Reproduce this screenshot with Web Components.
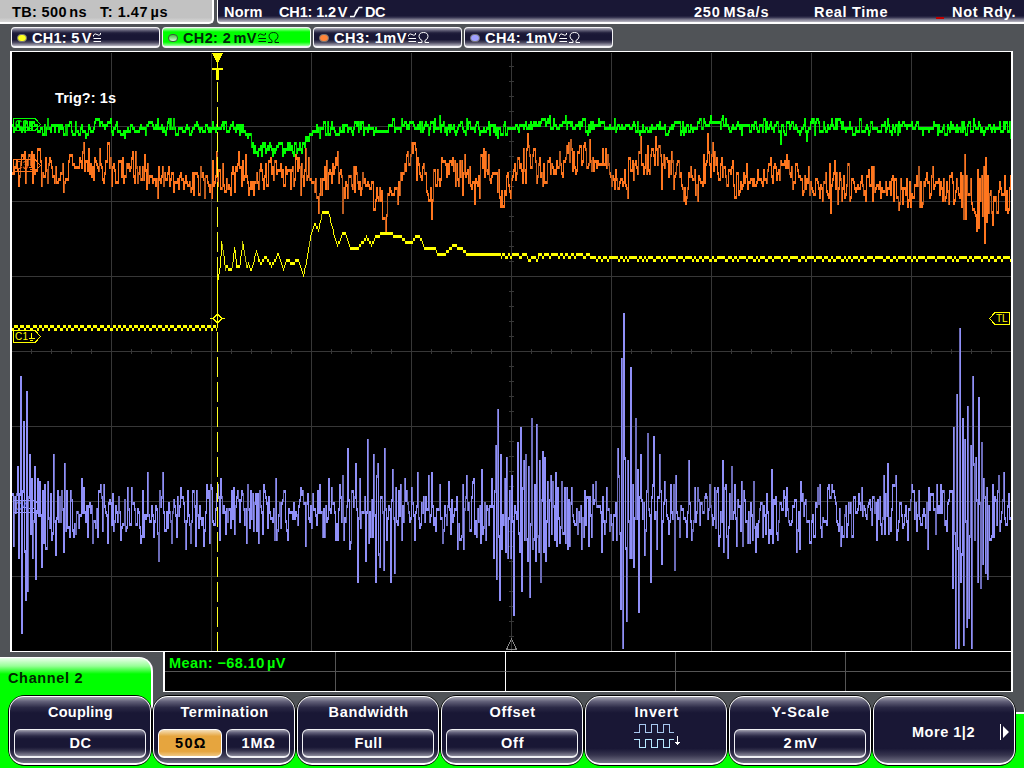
<!DOCTYPE html>
<html lang="en"><head><meta charset="utf-8"><title>Oscilloscope</title>
<style>html,body{margin:0;padding:0;width:1024px;height:768px;overflow:hidden;background:#505357}</style></head>
<body><scope-app></scope-app>
<script>
const define=(name,html,init)=>customElements.define(name,class extends HTMLElement{
  connectedCallback(){
    if(this.shadowRoot)return;
    this.attachShadow({mode:'open'}).innerHTML=html(this);
    if(init)init(this,this.shadowRoot);
  }
});

/* A label whose tracking is adjusted so that it fills the width in "w". Units sit close to their number. */
define('fit-label',()=>`<style>:host{display:block;flex:none;white-space:pre;font:bold 14.500px/16px "Liberation Sans",Arial,sans-serif;height:16px}span{display:inline-block}::slotted(b){margin-left:-2px}</style><span><slot></slot></span>`,
(el,root)=>{
  el.innerHTML=el.textContent.replace(/(\d) (ns|µs|V|mV|µV|MSa\/s)$/,'$1 <b>$2</b>');
  const w=+el.getAttribute('w'),s=root.querySelector('span'),n=el.textContent.length;
  el.style.width=w+'px';
  s.style.letterSpacing=((w+.5-s.getBoundingClientRect().width)/(n-1)).toFixed(3)+'px';
});

define('coupling-mark',el=>`<style>:host{display:block;flex:none;height:12px}svg{display:block}</style>
<svg width="${el.hasAttribute('ohm')?22:9}" height="12" fill="none" stroke="currentColor"><path d="M.5 4.5V3Q2 1 4 2.500T7.500 2.500V1M.500 6.500H8M.500 9.500H8"/>${el.hasAttribute('ohm')?'<path d="M10 10.500h4v-2Q11 7 11 4.500Q11 .500 15.500 .500T20 4.500Q20 7 17 8.500v2h4"/>':''}</svg>`);

define('top-bar',()=>`<style>
:host{display:flex;height:24px;gap:3px}
.l{box-sizing:border-box;width:214px;height:24px;background:linear-gradient(#c2c2c2 80%,#d8d8d8);border-right:2px solid #fff;border-bottom:2px solid #fff;border-radius:0 0 5px 0;display:flex;padding:4px 0 0 12px;gap:14px;color:#000}
.r{box-sizing:border-box;flex:1;background:linear-gradient(#191735 0 72%,#353350 79%,#777589 88%,#b9b8c3);border-bottom:2px solid #fff;border-left:1px solid #fff;border-radius:0 0 0 4px;display:flex;padding:4px 0 0 6px;color:#fff}
.m{margin-left:17px}.s{margin:2px 2px 0 3px}.rate{margin-left:309px}.rt{margin-left:46px}.red{width:8px;height:2px;margin:13px 8px 0 49px;background:#c00000}
</style><div class="l"><fit-label w="74">TB: 500 ns</fit-label><fit-label w="67">T: 1.47 µs</fit-label></div>
<div class="r"><fit-label w="38">Norm</fit-label><fit-label class="m" w="68">CH1: 1.2 V</fit-label>
<svg class="s" width="13" height="12" fill="none" stroke="#fff" stroke-width="1.500"><path d="M0 10.500H4L9 1.500H12.500M5 7.500L7 3.500"/></svg>
<fit-label w="20">DC</fit-label><fit-label class="rate" w="74">250 MSa/s</fit-label><fit-label class="rt" w="73">Real Time</fit-label><div class="red"></div><fit-label w="63">Not Rdy.</fit-label></div>`);

define('channel-chip',el=>`<style>
:host{display:flex;box-sizing:border-box;width:149px;height:21px;border:1px solid #f4f4f6;border-bottom-width:2px;border-radius:4px;padding:2px 0 0 5px;color:#fff;
background:linear-gradient(#b5b4c0 0,#65637a 12%,#211f3c 27%,#191735 38% 65%,#49475e 80%,#b5b4c0)}
:host([active]){background:linear-gradient(#b0ffb0,#00ff00 22% 78%,#a0ffa0);color:#00280a}
.d{width:8px;height:6px;border:1px solid #777;border-radius:4px;background:${el.getAttribute('dot')};margin:4px 5px 0 0;flex:none}
:host([active]) .d{border-color:#3a5a3a;background:linear-gradient(#40c040,#d8f8d8)}
coupling-mark{margin:2px 0 0 2px}</style><div class="d"></div><fit-label w="${el.getAttribute('w')}">${el.getAttribute('label')}</fit-label><coupling-mark ${el.hasAttribute('ohm')?'ohm':''}></coupling-mark>`);

/* Waveform data: flat lists of x,y pairs. */
const BASE={
 c3:[12,170,40,165,60,173,85,160,100,167,130,170,150,178,180,180,210,180,230,178,250,175,270,173,290,173,305,170,312,180,318,198,324,178,335,165,345,192,355,175,372,190,386,205,400,182,405,160,415,150,420,165,425,190,431,196,435,178,442,165,450,175,465,175,475,194,485,160,495,166,500,192,515,175,530,160,545,170,560,166,570,157,590,158,600,158,615,173,628,180,640,157,655,157,665,170,675,170,685,194,690,170,697,194,705,158,712,162,720,170,740,180,760,178,780,172,800,178,825,190,840,182,860,185,880,188,905,194,925,185,950,190,965,195,975,200,990,200,1011,196],
 c2:[12,128,244,128,248,136,251,144,254,149,302,150,306,142,312,133,322,129,400,126,500,129,535,125,560,123,590,126,680,128,720,123,740,127,1011,129],
 c1:[12,328,216,328,217,282,219,270,221,242,225,269,227,266,229,270,231,270,234,247,236,266,239,266,242,242,244,254,246,266,248,264,251,270,256,250,258,260,261,263,265,257,271,266,278,254,283,270,286,260,292,263,298,260,303,276,306,260,310,236,314,224,318,230,322,212,328,212,333,232,337,245,340,240,342,233,345,234,350,247,358,248,366,237,371,245,376,236,386,233,400,237,406,242,412,242,415,236,419,236,424,248,434,247,437,254,445,253,452,246,461,248,466,253,500,253,505,256,520,254,530,257,545,255,570,254,590,256,620,257,1011,259]};
const PEAK={
 c3:[24,150,39,148,41,187,63,192,83,142,88,148,103,183,132,151,134,184,178,190,209,192,216,151,228,188,245,155,248,195,270,157,295,154,300,195,318,213,337,150,344,200,353,166,386,217,413,142,431,219,454,160,485,151,500,207,528,145,542,186,570,139,589,139,627,199,640,136,655,136,661,189,673,189,685,204,703,154,711,154,738,195,780,160,783,163,802,195,834,160,850,198,907,207,948,204,949,175,962,175,963,219,964,154,965,219,966,175,973,211,976,231,977,169,978,229,979,178,981,176,982,218,983,165,984,244,985,157,986,222,987,175,988,213,992,225,993,197,1004,175,1005,211],
 c2:[47,118,124,138,157,118,439,115,497,138,780,145,806,142,973,118],
 c4:[12,493,14,547,18,466,19,558,21,376,22,634,24,421,25,553,26,600,27,391,28,592,30,454,32,478,33,558,35,466,36,579,38,478,42,568,43,490,44,544,45,484,48,481,51,493,53,534,54,454,56,556,62,490,64,552,65,463,70,538,71,490,76,535,82,478,84,487,88,538,101,484,104,484,114,532,128,487,132,487,148,472,159,562,160,490,163,472,172,544,186,550,188,490,191,543,196,547,197,490,204,547,207,484,210,543,212,487,220,541,221,478,232,490,242,490,247,543,248,484,259,543,264,484,276,478,277,541,284,490,288,541,303,490,306,547,308,493,318,490,320,484,323,537,329,478,332,487,336,541,340,484,343,475,344,540,348,448,350,550,356,463,358,583,360,478,366,562,368,439,369,543,374,454,376,583,378,463,380,568,384,571,385,448,387,540,391,583,393,469,395,574,401,485,402,541,405,478,415,541,418,472,429,475,432,472,440,484,457,497,458,550,463,485,464,550,467,475,474,478,482,469,486,541,492,478,494,559,496,445,497,580,498,409,499,538,500,601,501,454,502,550,505,478,506,553,507,457,508,559,510,490,511,559,512,475,514,616,518,442,520,553,521,427,522,592,524,460,525,541,526,454,528,562,529,466,530,598,532,418,533,550,535,485,536,562,537,424,538,538,539,553,540,460,541,583,543,451,544,553,545,457,546,562,548,480,549,547,551,475,552,535,553,481,555,541,556,472,557,547,558,487,562,481,563,535,565,487,566,544,567,487,570,546,572,487,582,550,585,490,589,547,596,481,602,553,607,487,613,541,617,541,618,448,619,475,621,610,622,358,623,650,624,313,625,457,626,550,627,622,628,460,630,559,631,367,632,558,634,568,636,418,638,469,639,613,641,454,645,556,648,433,651,583,654,436,657,550,660,454,662,565,665,481,671,484,675,571,676,475,680,538,689,460,693,532,695,487,698,487,710,484,718,487,720,538,723,460,724,553,725,487,726,484,728,559,730,492,732,466,735,484,737,547,742,481,743,547,748,543,750,544,754,481,756,553,769,543,772,469,773,544,797,553,800,550,801,481,818,487,822,538,829,484,832,484,841,547,847,538,862,487,877,541,884,475,885,535,888,463,889,535,896,475,908,541,912,484,928,550,929,487,941,484,953,589,954,427,956,649,957,394,958,550,959,650,960,328,961,583,962,556,963,418,964,646,965,439,967,628,968,406,969,619,971,445,972,650,973,376,974,463,975,541,976,457,978,583,979,397,981,589,982,442,983,565,984,478,986,574,987,487,988,580,994,538,999,475,1000,532,1004,472,1009,493]};
function lerp(p,x){for(let i=2;i<p.length;i+=2)if(x<=p[i]){const t=(x-p[i-2])/(p[i]-p[i-2]);return p[i-1]+t*(p[i+1]-p[i-1])}return p[p.length-1]}
function wave(id){
  let s={c1:7,c2:23,c3:51,c4:97}[id];
  const rnd=()=>{s=(s*1664525+1013904223)>>>0;return s/4294967296};
  const y=[];
  let hold=0,low=0;
  for(let x=12;x<=1010;x++){
    if(x>12&&id!=='c1'&&rnd()<(id==='c2'?.22:.12)){y[x]=y[x-1];continue}
    const n=(rnd()+rnd()-1);
    if(id==='c1'){
      if(--hold<0){low=low?0:1;hold=low?1+(rnd()<.4):x<216?2+(rnd()<.5):1+Math.floor(rnd()*(x>620?7:9))}
      if(x<217)y[x]=326.5+low*3;
      else if(x>500)y[x]=Math.min(257.5,lerp(BASE.c1,x))+low*3;
      else y[x]=lerp(BASE.c1,x);
    }
    if(id==='c2')y[x]=lerp(BASE.c2,x)+n*9;
    if(id==='c3')y[x]=lerp(BASE.c3,x)+n*24*(rnd()<.12?1.250:.9);
    if(id==='c4'){const burst=x<50||Math.abs(x-375)<30||Math.abs(x-520)<50||Math.abs(x-728)<16;y[x]=513+n*(burst?42:31)}
  }
  const top=[];
  for(let x=12;x<=1010;x++)top[x]=Math.round((y[x]-2.5)/3)*3+1;
  const p=PEAK[id]||[];
  for(let i=0;i<p.length;i+=2){const mid=id==='c4'?513:lerp(BASE[id],p[i]);top[Math.max(12,p[i]-(id==='c4'?1:0))]=Math.round(((p[i+1]>mid?p[i+1]-3:p[i+1])-1)/3)*3+1}
  let bright='',dim='',prev=top[12];
  for(let x=12;x<=1010;x++){
    const q=top[x];
    let a=q,b=q+3;
    if(id==='c4'||id==='c3'){a=Math.min(q,prev);b=Math.max(q,prev)+3}
    else if(q>prev)a=prev+(id==='c2'?0:3);else if(q<prev)b=prev+(id==='c2'?3:0);
    const seg=`M${x} ${a}h1V${Math.min(651,b)}h-1z`;
    if(b-a>(id==='c1'?3:11)&&rnd()<.32)dim+=seg;else bright+=seg;prev=q;
  }
  return {bright,dim};
}
define('scope-plot',()=>{
  let grid='',ticks='';
  for(let x=111;x<1000;x+=100)grid+=`M${x} 53h1v598h-1z`;
  for(let y=126;y<600;y+=75)grid+=`M12 ${y}h999v1h-999z`;
  for(let x=31;x<1000;x+=20)ticks+=`M${x} 349h1v5h-1z`;
  for(let y=66;y<650;y+=15)ticks+=`M509 ${y}h5v1h-5z`;
  const t=(id,c,d)=>{const w=wave(id);return `<path fill="${c}" d="${w.bright}"/><path fill="${d}" d="${w.dim}"/>`};
  const tag=(n,y,c)=>`<g stroke="${c}" fill="none"><path d="M13.500 ${y+.5}H35L40.500 ${y+6.500}L35 ${y+12.500}H13.500Z"/><path d="M31.500 ${y+3}v5M28.500 ${y+8.500}h6M30 ${y+10.500}h3"/><text x="15 22.500" y="${y+10}" stroke="none" fill="${c}">${n}</text></g>`;
  return `<style>:host{display:block;box-sizing:border-box;width:1003px;height:601px;border:solid #fff;border-width:1px 2px 1px 2px;background:#000}
svg{display:block}text{font:10px "Liberation Sans",Arial,sans-serif}.b{font:bold 14.500px "Liberation Sans",Arial,sans-serif}</style>
<svg width="999" height="599" viewBox="12 52 999 599" shape-rendering="crispEdges">
<path fill="#373737" d="${grid}${ticks}"/>
${t('c4','#9090f8','#6c6cb8')}${t('c3','#ff761e','#b95b20')}${t('c2','#00ff00','#00d000')}${t('c1','#ffff00','#bcbc10')}
${tag('C4',500,'#9090f8')}${tag('C3',159,'#ff761e')}${tag('C2',118,'#00ff00')}${tag('C1',330,'#ffff00')}
<path d="M217.500 82V651" stroke="#ffff20" stroke-dasharray="20 5"/>
<path d="M212 53h11l-5 10v5h5v2h-4v10h-3v-10h-4v-2h5v-5z" fill="#ffff00"/>
<path d="M217 276h1v52h-1z" fill="#ffff00"/><path d="M210 318.500h3l4.500-4.500 4.500 4.500-4.500 4.500-4.500-4.500M222 318.500h3" fill="none" stroke="#ffff00"/>
<path d="M1009.500 312.500H995L989.500 318.500L995 324.500H1009.500Z" fill="#000" stroke="#ffff00"/><text x="996 1002" y="322" fill="#ffff00">TL</text>
<path d="M511.500 639L506.500 649.500H516.500Z" fill="none" stroke="#888"/>
<text class="b" x="55" y="103" fill="#fff" textLength="61">Trig?: 1s</text></svg>`});

define('measure-table',()=>`<style>:host{display:grid;box-sizing:border-box;width:850px;height:40px;background:#000;border:solid #fff;border-width:0 2px 1px 2px;grid-template-columns:171px 170px 170px 170px 1fr;grid-template-rows:20px 19px}
div{border-right:1px solid #555;border-bottom:1px solid #555;box-sizing:border-box}.w{border-right-color:#fff}div:nth-of-type(5n){border-right:0}div:nth-of-type(n+6){border-bottom:0}
fit-label{color:#00ff00;margin:3px 0 0 4px}</style><div><fit-label w="116">Mean: −68.10 µV</fit-label></div><div class="w"></div><div></div><div></div><div></div><div></div><div class="w"></div><div></div><div></div><div></div>`);

define('value-button',()=>`<style>:host{display:flex;flex:1;justify-content:center;align-items:center;box-sizing:border-box;height:29px;border:1.500px solid #f0f0f4;border-bottom-width:2px;border-radius:6px;color:#fff;background:linear-gradient(#a3a2b0,#62607a 10%,#2b2946 23%,#191735 34% 66%,#36344e 80%,#8a899a)}
:host([on]){color:#000;background:linear-gradient(#f5dfb9,#e6a53e 24% 82%,#efc782);border-color:#fff}</style><slot></slot>`);
define('soft-key',()=>`<style>:host{display:block;box-sizing:border-box;width:144px;height:71px;background:#000;border-radius:17px;padding:1px}
.k{box-sizing:border-box;height:69px;border:1.500px solid #fff;border-bottom-width:2px;border-radius:15px;padding:7px 4px 0;color:#fff;background:linear-gradient(#a3a2b0,#615f78 7%,#2b2946 16%,#191735 24% 78%,#36344e 88%,#777689)}
.t{display:flex;justify-content:center;height:25px}.v{display:flex;gap:4px}</style><div class="k"><slot name="full"></slot><div class="t"><slot name="title"></slot></div><div class="v"><slot></slot></div></div>`);

define('more-row',()=>`<style>:host{display:flex;height:16px;padding:20px 0 0 34px;align-items:center}svg{margin-left:26px}</style><fit-label w="62">More 1|2</fit-label><svg width="10" height="16"><path d="M0 0h1v16H0zM3 2l6 6-6 6z" fill="#fff"/></svg>`);

const key=(title,w,body)=>`<soft-key><fit-label slot="title" w="${w}">${title}</fit-label>${body}</soft-key>`;
const val=(text,w,on='')=>`<value-button ${on}><fit-label w="${w}">${text}</fit-label></value-button>`;
define('scope-app',()=>`<style>
:host{display:flex;flex-direction:column;width:1024px;height:768px;background:#505357;overflow:hidden}
.chips{display:flex;gap:2px;padding:3px 0 0 11px;height:24px}
scope-plot{margin-left:10px}
.foot{display:flex;height:43px;gap:10px}
.tab{box-sizing:border-box;width:153px;height:56px;margin-top:5px;border:solid #fff;border-width:1px 2px 0 0;border-radius:0 14px 0 0;background:linear-gradient(#eaffea,#98ff98 8px,#00ff00 16px);padding:12px 0 0 8px;color:#002800}
.keys{display:flex;height:73px;padding:0 8px;box-sizing:border-box;background:linear-gradient(90deg,#00ff00 151px,#fff 151px 153px,transparent 153px) 0 0/100% 19px no-repeat,linear-gradient(#505357 17px,#fff 17px 19px,#00ff00 19px)}
.inv{display:block;margin:-5px auto 0}
</style>
<top-bar></top-bar>
<div class="chips"><channel-chip label="CH1: 5 V" w="59" dot="#ffff20"></channel-chip><channel-chip active label="CH2: 2 mV" w="73" ohm dot="#b0f0b0"></channel-chip><channel-chip label="CH3: 1mV" w="72" ohm dot="#ff843a"></channel-chip><channel-chip label="CH4: 1mV" w="72" ohm dot="#a0a0ff"></channel-chip></div>
<scope-plot></scope-plot>
<div class="foot"><div class="tab"><fit-label w="74">Channel 2</fit-label></div><measure-table></measure-table></div>
<div class="keys">
${key('Coupling',64,val('DC',21))}
${key('Termination',87,val('50Ω',30,'on')+val('1MΩ',33))}
${key('Bandwidth',79,val('Full',27))}
${key('Offset',45,val('Off',22))}
${key('Invert',43,`<svg class="inv" width="48" height="28" fill="none" shape-rendering="crispEdges"><path d="M2 8.500h5.500v-8h6v8h6v-8h6v8h6v-8h6v8h4" stroke="#a8c8f0"/><path d="M2 15.500h5.500v8h6v-8h6v8h6v-8h6v8h6v-8h4" stroke="#b8e8ff"/><path d="M45.500 12v8" stroke="#fff"/><path d="M43 18h5l-2.500 3z" fill="#fff"/></svg>`)}
${key('Y-Scale',57,val('2 mV',33))}
<soft-key><more-row slot="full"></more-row></soft-key></div>`);
</script></body></html>
